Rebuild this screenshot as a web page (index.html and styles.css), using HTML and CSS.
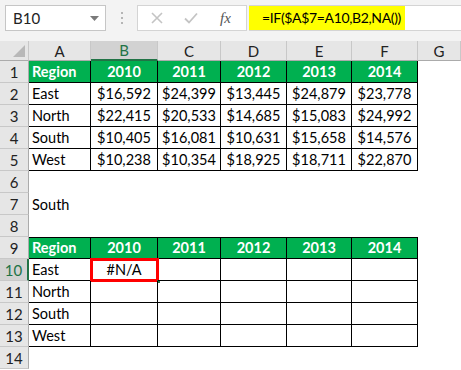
FILE: index.html
```html
<!DOCTYPE html>
<html>
<head>
<meta charset="utf-8">
<link rel="stylesheet" href="styles.css">
</head>
<body>
<div class="toolbar">
  <div class="namebox">
    <span class="name">B10</span>
    <svg class="arrow" width="9" height="5" viewBox="0 0 9 5"><path d="M0 0H9L4.5 5Z" fill="#7a7a7a"/></svg>
  </div>
  <div class="dots">
    <svg width="3" height="13" viewBox="0 0 3 13"><rect x="0" y="0" width="2" height="2" fill="#b5b5b5"/><rect x="0" y="5" width="2" height="2" fill="#b5b5b5"/><rect x="0" y="10" width="2" height="2" fill="#b5b5b5"/></svg>
  </div>
  <div class="fxbox">
    <svg class="btn" width="12" height="12" viewBox="0 0 12 12"><path d="M1 1L11 11M11 1L1 11" stroke="#c4c4c4" stroke-width="1.6"/></svg>
    <svg class="btn" width="14" height="12" viewBox="0 0 14 12"><path d="M1 6.5L5 10.5L13 1.5" stroke="#c4c4c4" stroke-width="1.8" fill="none"/></svg>
    <span class="fx">fx</span>
  </div>
  <div class="input">
    <div class="formula">=IF($A$7=A10,B2,NA())</div>
  </div>
</div>
<div class="sheet">
  <div class="ch corner"><svg width="12" height="12" viewBox="0 0 12 12"><path d="M12 0V12H0Z" fill="#b8b8b8"/></svg></div>
  <div class="ch">A</div><div class="ch sel">B</div><div class="ch">C</div><div class="ch">D</div><div class="ch">E</div><div class="ch">F</div><div class="ch">G</div>

  <div class="rh">1</div>
  <div class="c t g l">Region</div><div class="c t g">2010</div><div class="c t g">2011</div><div class="c t g">2012</div><div class="c t g">2013</div><div class="c t g">2014</div><div class="c"></div>

  <div class="rh">2</div>
  <div class="c t l">East</div><div class="c t">$16,592</div><div class="c t">$24,399</div><div class="c t">$13,445</div><div class="c t">$24,879</div><div class="c t">$23,778</div><div class="c"></div>

  <div class="rh">3</div>
  <div class="c t l">North</div><div class="c t">$22,415</div><div class="c t">$20,533</div><div class="c t">$14,685</div><div class="c t">$15,083</div><div class="c t">$24,992</div><div class="c"></div>

  <div class="rh">4</div>
  <div class="c t l">South</div><div class="c t">$10,405</div><div class="c t">$16,081</div><div class="c t">$10,631</div><div class="c t">$15,658</div><div class="c t">$14,576</div><div class="c"></div>

  <div class="rh">5</div>
  <div class="c t l">West</div><div class="c t">$10,238</div><div class="c t">$10,354</div><div class="c t">$18,925</div><div class="c t">$18,711</div><div class="c t">$22,870</div><div class="c"></div>

  <div class="rh">6</div>
  <div class="c"></div><div class="c"></div><div class="c"></div><div class="c"></div><div class="c"></div><div class="c"></div><div class="c"></div>

  <div class="rh">7</div>
  <div class="c l">South</div><div class="c"></div><div class="c"></div><div class="c"></div><div class="c"></div><div class="c"></div><div class="c"></div>

  <div class="rh">8</div>
  <div class="c"></div><div class="c"></div><div class="c"></div><div class="c"></div><div class="c"></div><div class="c"></div><div class="c"></div>

  <div class="rh">9</div>
  <div class="c t g top l">Region</div><div class="c t g top">2010</div><div class="c t g top">2011</div><div class="c t g top">2012</div><div class="c t g top">2013</div><div class="c t g top">2014</div><div class="c"></div>

  <div class="rh rsel">10</div>
  <div class="c t l">East</div><div class="c t active">#N/A<span class="selbox"></span><span class="handle"></span></div><div class="c t"></div><div class="c t"></div><div class="c t"></div><div class="c t"></div><div class="c"></div>

  <div class="rh">11</div>
  <div class="c t l">North</div><div class="c t"></div><div class="c t"></div><div class="c t"></div><div class="c t"></div><div class="c t"></div><div class="c"></div>

  <div class="rh">12</div>
  <div class="c t l">South</div><div class="c t"></div><div class="c t"></div><div class="c t"></div><div class="c t"></div><div class="c t"></div><div class="c"></div>

  <div class="rh">13</div>
  <div class="c t l">West</div><div class="c t"></div><div class="c t"></div><div class="c t"></div><div class="c t"></div><div class="c t"></div><div class="c"></div>

  <div class="rh">14</div>
  <div class="c"></div><div class="c"></div><div class="c"></div><div class="c"></div><div class="c"></div><div class="c"></div><div class="c"></div>
</div>
</body>
</html>
```

FILE: styles.css
```css
* { box-sizing: border-box; }
html, body { margin: 0; padding: 0; }
body {
  width: 461px;
  height: 370px;
  overflow: hidden;
  background: #fff;
  font-family: Lato, "Noto Sans", sans-serif;
  color: #000;
}
.toolbar {
  height: 41px;
  background: #f3f3f3;
  display: flex;
  align-items: flex-start;
  padding: 5px 0 0 5px;
}
.namebox {
  width: 101px;
  height: 26px;
  background: #fff;
  border: 1px solid #c6c6c6;
  display: flex;
  align-items: center;
  padding: 0 0 0 7px;
}
.name { font-size: 15px; color: #222; flex: 1; }
.arrow { margin-right: 6px; }
.dots {
  width: 31px;
  height: 26px;
  display: flex;
  align-items: center;
  justify-content: center;
  padding-left: 1px;
}
.fxbox {
  width: 110px;
  height: 26px;
  background: #fff;
  border: 1px solid #d4d4d4;
  display: flex;
  align-items: center;
  padding-left: 13px;
  gap: 21px;
}
.fx {
  font-family: "Liberation Serif", serif;
  font-style: italic;
  font-size: 15px;
  color: #555;
  margin-left: 1px;
}
.input {
  flex: 1;
  height: 26px;
  margin-left: 2px;
  background: #fff;
  border-top: 1px solid #d4d4d4;
  border-bottom: 1px solid #d4d4d4;
}
.formula {
  width: 156px;
  height: 100%;
  background: #ffff00;
  font-size: 14px;
  line-height: 24px;
  padding-left: 13px;
  letter-spacing: -0.35px;
  white-space: nowrap;
}
.sheet {
  display: grid;
  grid-template-columns: 29px 62px 67px 63px 66px 65px 66px 1fr;
  grid-template-rows: 20px repeat(14, 22px);
}
.ch {
  background: #e6e6e6;
  border-right: 1px solid #c8c8c8;
  border-bottom: 1px solid #ababab;
  font-size: 15px;
  color: #222;
  display: flex;
  align-items: center;
  justify-content: center;
}
.ch.sel {
  background: #d2d2d2;
  border-bottom: 2px solid #217346;
  color: #217346;
}
.corner {
  justify-content: flex-end;
  align-items: flex-end;
  padding: 0 3px 3px 0;
}
.rh {
  background: #e6e6e6;
  border-right: 1px solid #ababab;
  border-bottom: 1px solid #c8c8c8;
  font-size: 15px;
  color: #222;
  display: flex;
  align-items: center;
  justify-content: center;
}
.rh.rsel {
  background: #d2d2d2;
  color: #217346;
  border-right: 2px solid #217346;
}
.c {
  position: relative;
  font-size: 14.5px;
  display: flex;
  align-items: center;
  justify-content: center;
  white-space: nowrap;
}
.c.l { justify-content: flex-start; padding-left: 3px; }
.c.t {
  border-right: 1px solid #000;
  border-bottom: 1px solid #000;
}
.c.g {
  background: #00b050;
  color: #fff;
  font-weight: bold;
}
.c.top { box-shadow: inset 0 1px 0 #000; }
.selbox {
  position: absolute;
  left: -1px;
  top: -1px;
  right: -2px;
  bottom: -2px;
  border: 3px solid #ff0000;
}
.handle {
  position: absolute;
  right: -3px;
  bottom: -3px;
  width: 3px;
  height: 3px;
  background: #217346;
}
```
